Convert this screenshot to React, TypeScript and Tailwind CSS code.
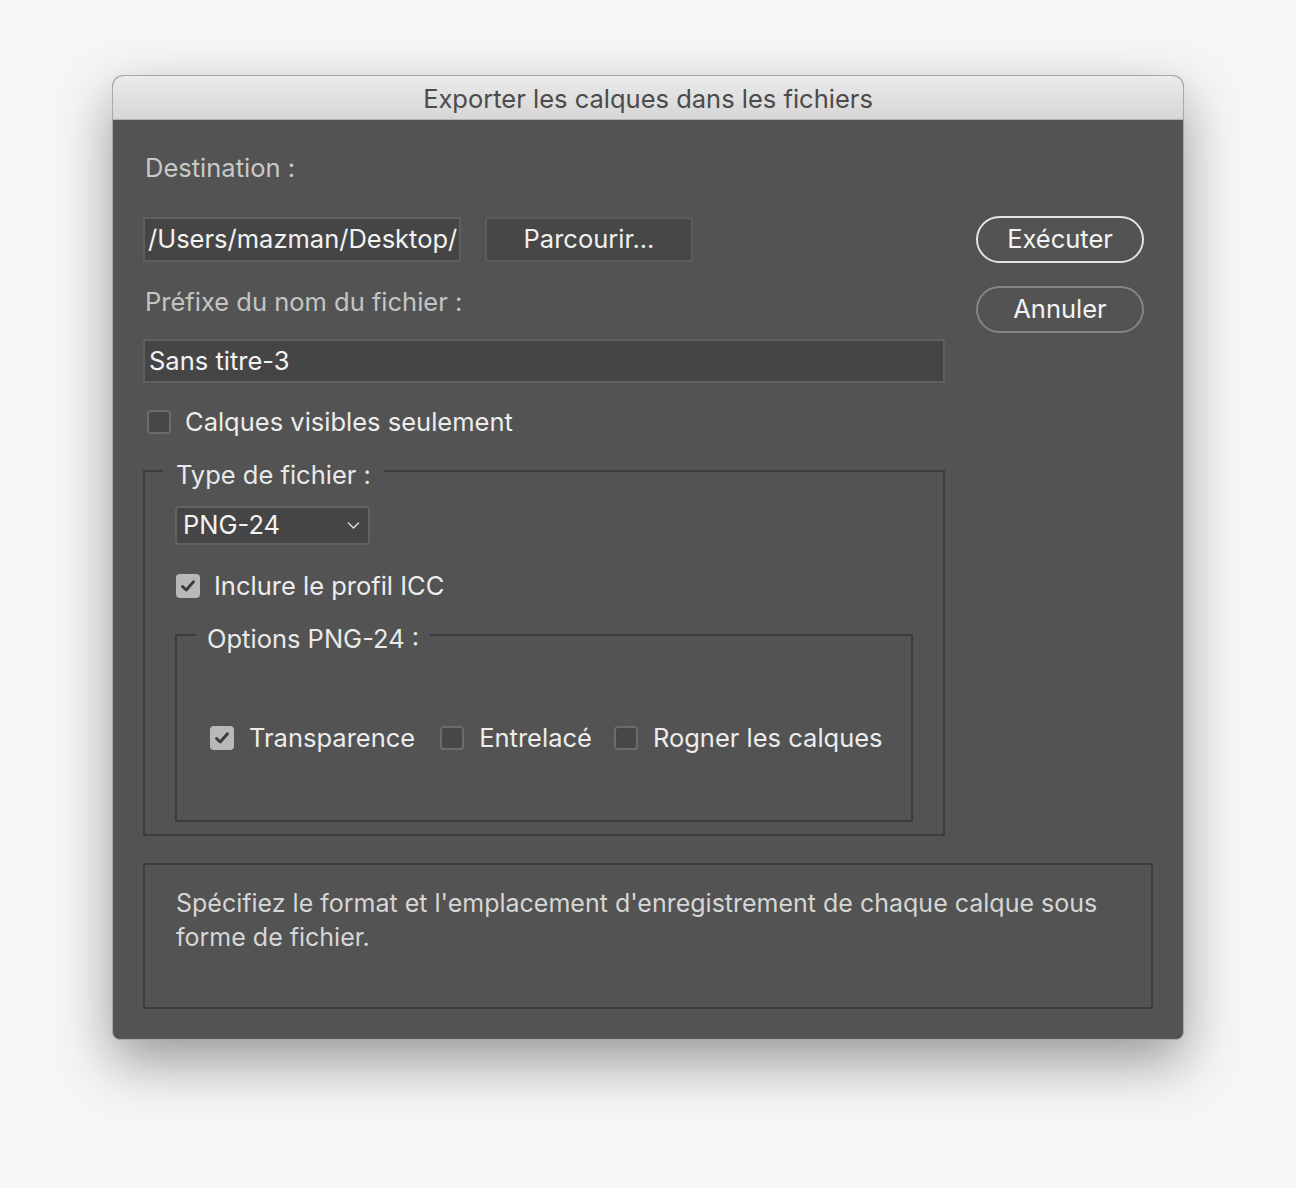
import React from "react";

const font = { fontFamily: 'Inter, "Noto Sans", sans-serif' };

function Box({ checked }: { checked?: boolean }) {
  if (checked) {
    return (
      <span className="flex h-[24px] w-[24px] shrink-0 items-center justify-center rounded-[4px] bg-[#b8b8b8]">
        <svg width="16" height="14" viewBox="0 0 16 14">
          <path d="M2.5 7.5 L6.2 11 L13.5 2.8" fill="none" stroke="#3a3a3a" strokeWidth="2.8" strokeLinecap="round" strokeLinejoin="round" />
        </svg>
      </span>
    );
  }
  return <span className="block h-[24px] w-[24px] shrink-0 rounded-[4px] border-2 border-[#6b6b6b] bg-[#474747]" />;
}

export default function App() {
  return (
    <div className="min-h-[1188px] w-[1296px] bg-[#f6f6f6] pt-[75px] pl-[112px]" style={font}>
      <div className="w-[1072px] overflow-hidden rounded-t-[11px] rounded-b-[8px] border border-[#a9a9a9] bg-[#535353] shadow-[0_22px_55px_rgba(0,0,0,0.38)]">
        {/* title bar */}
        <div className="flex h-[44px] items-center justify-center border-b border-[#b3b3b3] bg-gradient-to-b from-[#ebebeb] to-[#d6d6d6] pt-[2px] text-[25.5px] leading-[28px] text-[#4b4b4b]">
          Exporter les calques dans les fichiers
        </div>
        {/* body */}
        <div className="pl-[30px] pr-[30px] pt-[34px] pb-[30px]">
          <div className="flex">
            <div className="w-[802px]">
              <div className="pl-[2px] text-[25.5px] leading-[28px] text-[#c9c9c9]">Destination :</div>
              <div className="mt-[35px] flex gap-[24px]">
                <div className="flex h-[45px] w-[318px] items-center overflow-hidden whitespace-nowrap border-2 border-[#5f5f5f] bg-[#454545] pl-[3px] text-[25.5px] text-[#f3f3f3]">
                  /Users/mazman/Desktop/
                </div>
                <div className="flex h-[45px] w-[208px] items-center justify-center rounded-[4px] border-2 border-[#5c5c5c] bg-[#474747] text-[25.5px] text-[#f0f0f0]">
                  Parcourir...
                </div>
              </div>
              <div className="mt-[26px] pl-[2px] text-[25.5px] leading-[28px] text-[#c4c4c4]">Préfixe du nom du fichier :</div>
              <div className="mt-[23px] flex h-[44px] items-center border-2 border-[#5f5f5f] bg-[#454545] pl-[4px] text-[25.5px] text-[#f3f3f3]">
                Sans titre-3
              </div>
              <div className="mt-[25px] flex items-center gap-[14px] pl-[4px] text-[25.5px] leading-[28px] text-[#ececec]">
                <Box />
                <span>Calques visibles seulement</span>
              </div>
              <fieldset className="mt-[21px] h-[379px] border-2 border-[#3c3c3c]">
                <legend className="ml-[18px] px-[13px] text-[25.5px] leading-[28px] text-[#e9e9e9]">
                  <span className="relative top-[4px]">Type de fichier :</span>
                </legend>
                <div className="px-[30px]">
                  <div className="mt-[21px] flex h-[39px] w-[195px] items-center justify-between rounded-[4px] border-2 border-[#626262] bg-[#454545] pl-[6px] pr-[8px] text-[25.5px] text-[#f3f3f3]">
                    <span>PNG-24</span>
                    <svg width="13" height="9" viewBox="0 0 13 9">
                      <path d="M1.5 2 L6.5 7 L11.5 2" fill="none" stroke="#d6d6d6" strokeWidth="1.6" strokeLinecap="round" strokeLinejoin="round" />
                    </svg>
                  </div>
                  <div className="mt-[27px] flex items-center gap-[14px] pl-[1px] text-[25.5px] leading-[28px] text-[#ececec]">
                    <Box checked />
                    <span>Inclure le profil ICC</span>
                  </div>
                  <fieldset className="mt-[21px] h-[201px] border-2 border-[#3c3c3c]">
                    <legend className="ml-[19px] px-[11px] text-[25.5px] leading-[28px] text-[#e9e9e9]">
                      <span className="relative top-[4px]">Options PNG-24 :</span>
                    </legend>
                    <div className="mt-[75px] flex items-center pl-[33px] text-[25.5px] leading-[28px] text-[#ececec]">
                      <Box checked />
                      <span className="ml-[15px]">Transparence</span>
                      <span className="ml-[25px]"><Box /></span>
                      <span className="ml-[15px]">Entrelacé</span>
                      <span className="ml-[22px]"><Box /></span>
                      <span className="ml-[15px]">Rogner les calques</span>
                    </div>
                  </fieldset>
                </div>
              </fieldset>
            </div>
            <div className="ml-[31px] flex flex-col gap-[23px] pt-[62px]">
              <div className="flex h-[47px] w-[168px] items-center justify-center rounded-full border-2 border-[#e4e4e4] text-[25.5px] text-[#f3f3f3]">
                Exécuter
              </div>
              <div className="flex h-[47px] w-[168px] items-center justify-center rounded-full border-2 border-[#858585] text-[25.5px] text-[#f3f3f3]">
                Annuler
              </div>
            </div>
          </div>
          <div className="mt-[27px] h-[146px] w-[1010px] border-2 border-[#3c3c3c] pl-[31px] pt-[21px] pr-[15px] text-[25px] leading-[34px] text-[#d6d6d6]">
            Spécifiez le format et l'emplacement d'enregistrement de chaque calque sous forme de fichier.
          </div>
        </div>
      </div>
    </div>
  );
}
